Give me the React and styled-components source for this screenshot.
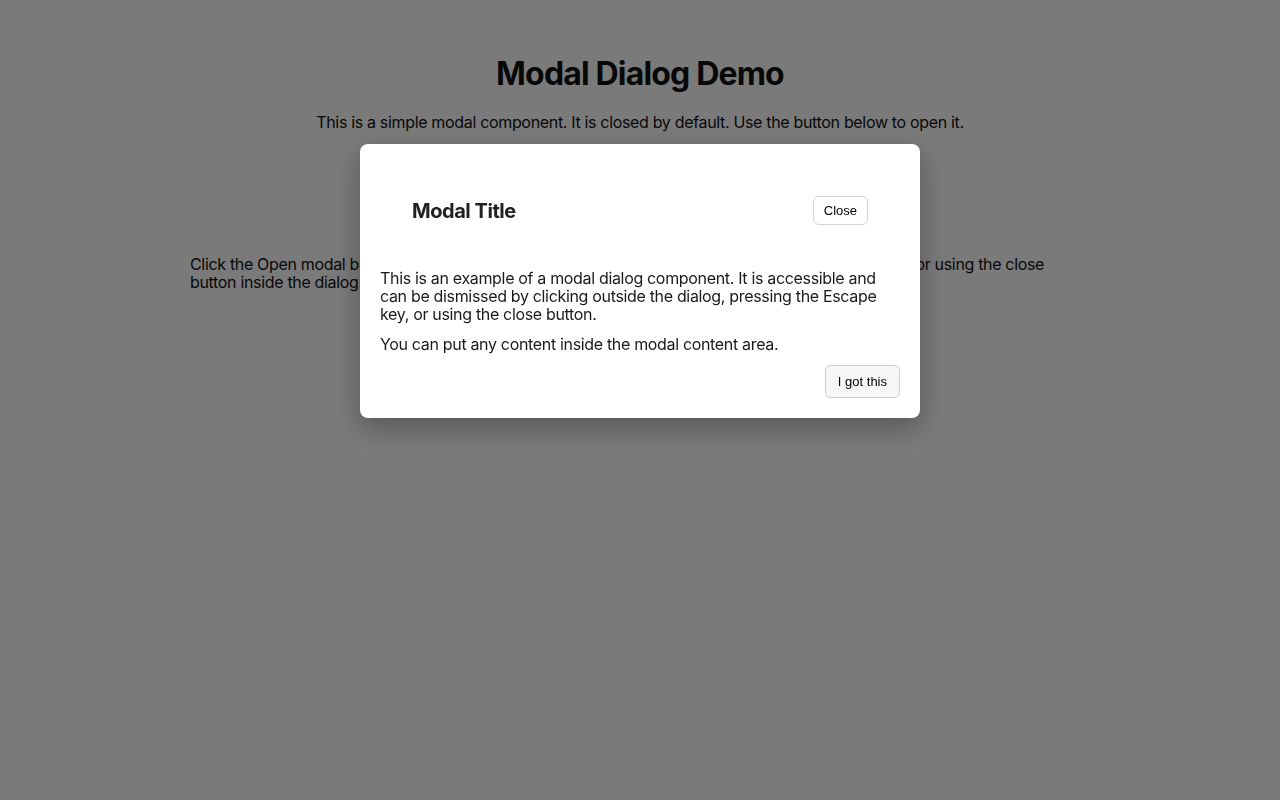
import React from "react";
import styled, { createGlobalStyle } from "styled-components";

const GlobalStyle = createGlobalStyle`
  html, body {
    margin: 0;
    padding: 0;
    background: #ffffff;
    color: #111111;
    font-family: Inter, "Noto Sans", sans-serif;
  }
`;

const Page = styled.main`
  max-width: 900px;
  margin: 0 auto;
  padding: 54px 0 40px;
  display: flex;
  flex-direction: column;
  align-items: center;
`;

const Heading = styled.h1`
  margin: 0;
  font-size: 32px;
  line-height: 40px;
  font-weight: 700;
  letter-spacing: -0.83px;
`;

const Lead = styled.p`
  margin: 18px 0 0;
  font-size: 16px;
  line-height: 20px;
  letter-spacing: -0.33px;
`;

const OpenButton = styled.button`
  margin-top: 38px;
  font-family: "Liberation Sans", Arial, sans-serif;
  font-size: 13px;
  padding: 8px 12px;
  border: 1px solid #cccccc;
  border-radius: 4px;
  background: #f5f5f5;
  color: #000;
`;

const Note = styled.p`
  align-self: stretch;
  margin: 52px 0 0;
  font-size: 16px;
  line-height: 18px;
  letter-spacing: -0.33px;
`;

const Backdrop = styled.div`
  position: fixed;
  inset: 0;
  background: rgba(0, 0, 0, 0.52);
  display: flex;
  justify-content: center;
  align-items: flex-start;
  padding-top: 144px;
`;

const Dialog = styled.div`
  width: 560px;
  box-sizing: border-box;
  background: #ffffff;
  border-radius: 8px;
  padding: 20px;
  box-shadow: 0 10px 30px rgba(0, 0, 0, 0.3);
  display: flex;
  flex-direction: column;
  color: #1a1a1a;
`;

const Header = styled.div`
  display: flex;
  align-items: center;
  justify-content: space-between;
  padding: 32px;
`;

const Title = styled.h2`
  margin: 0;
  font-size: 20px;
  line-height: 24px;
  font-weight: 700;
  letter-spacing: -0.45px;
  color: #222;
`;

const Text = styled.p`
  margin: 12px 0 0;
  font-size: 16px;
  line-height: 18px;
  letter-spacing: -0.33px;
`;

const Footer = styled.div`
  display: flex;
  justify-content: flex-end;
  margin-top: 12px;
`;

const SmallButton = styled.button`
  font-family: "Liberation Sans", Arial, sans-serif;
  font-size: 13px;
  color: #000;
  border: 1px solid ${(p) => (p.$muted ? "#cfcfcf" : "#d4d4d4")};
  border-radius: ${(p) => (p.$muted ? "5px" : "6px")};
  background: ${(p) => (p.$muted ? "#f6f6f6" : "#ffffff")};
  padding: ${(p) => (p.$muted ? "0 12px" : "0 10px")};
  height: ${(p) => (p.$muted ? "33px" : "29px")};
  cursor: pointer;
`;

export default function App() {
  return (
    <>
      <GlobalStyle />
      <Page>
        <Heading>Modal Dialog Demo</Heading>
        <Lead>
          This is a simple modal component. It is closed by default. Use the
          button below to open it.
        </Lead>
        <OpenButton>Open modal</OpenButton>
        <Note>
          Click the Open modal button to see the dialog. Dismiss it by clicking
          the backdrop, pressing Escape, or using the close button inside the
          dialog.
        </Note>
      </Page>
      <Backdrop>
        <Dialog role="dialog" aria-modal="true" aria-labelledby="modal-title">
          <Header>
            <Title id="modal-title">Modal Title</Title>
            <SmallButton>Close</SmallButton>
          </Header>
          <Text>
            This is an example of a modal dialog component. It is accessible
            and can be dismissed by clicking outside the dialog, pressing the
            Escape key, or using the close button.
          </Text>
          <Text>You can put any content inside the modal content area.</Text>
          <Footer>
            <SmallButton $muted>I got this</SmallButton>
          </Footer>
        </Dialog>
      </Backdrop>
    </>
  );
}
